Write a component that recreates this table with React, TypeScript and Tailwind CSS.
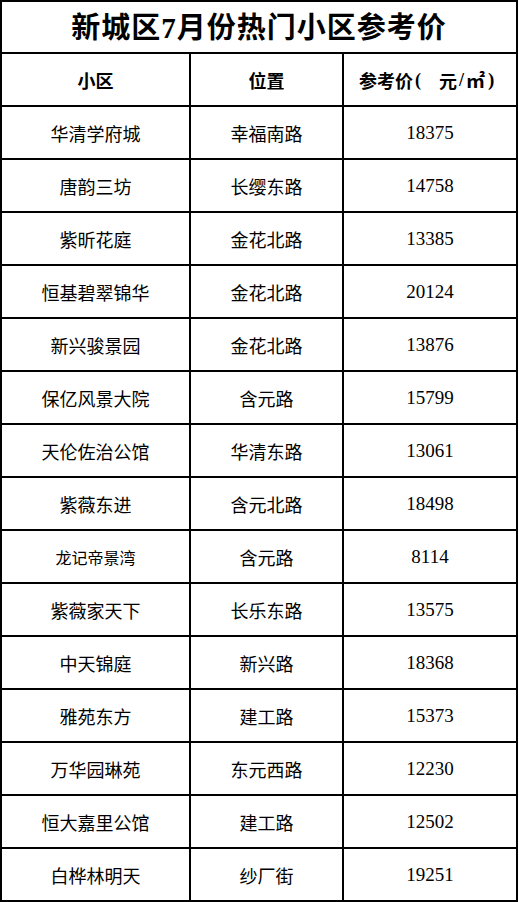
import React from "react";

const rows: [string, string, string][] = [
  ["华清学府城", "幸福南路", "18375"],
  ["唐韵三坊", "长缨东路", "14758"],
  ["紫昕花庭", "金花北路", "13385"],
  ["恒基碧翠锦华", "金花北路", "20124"],
  ["新兴骏景园", "金花北路", "13876"],
  ["保亿风景大院", "含元路", "15799"],
  ["天伦佐治公馆", "华清东路", "13061"],
  ["紫薇东进", "含元北路", "18498"],
  ["龙记帝景湾", "含元路", "8114"],
  ["紫薇家天下", "长乐东路", "13575"],
  ["中天锦庭", "新兴路", "18368"],
  ["雅苑东方", "建工路", "15373"],
  ["万华园琳苑", "东元西路", "12230"],
  ["恒大嘉里公馆", "建工路", "12502"],
  ["白桦林明天", "纱厂街", "19251"],
];

const cjk = "font-['Noto_Sans_CJK_SC',sans-serif]";
const latin = "font-['Liberation_Serif',serif]";

export default function App() {
  return (
    <div className="w-[519px] h-[902px] bg-white">
      <div className="w-[518px] border-l-2 border-t-2 border-black text-black">
        <div className="h-[52px] border-r-2 border-b-2 border-black flex items-center justify-center">
          <span className={`text-[29px] font-bold leading-none tracking-[1px] ${cjk}`}>
            新城区<span className={latin}>7</span>月份热门小区参考价
          </span>
        </div>
        <div className="flex h-[53px]">
          <div className={`w-[189px] border-r-2 border-b-2 border-black flex items-center justify-center text-[18px] font-bold leading-none ${cjk}`}>
            小区
          </div>
          <div className={`w-[153px] border-r-2 border-b-2 border-black flex items-center justify-center text-[18px] font-bold leading-none ${cjk}`}>
            位置
          </div>
          <div className="w-[174px] border-r-2 border-b-2 border-black flex items-center pl-[15px] text-[18px] font-bold leading-none whitespace-nowrap">
            <span className={cjk}>参考价</span>
            <span className={`${latin} ml-[2px] mr-[18px]`}>(</span>
            <span className={cjk}>元</span>
            <span className={`${latin} mx-[2px]`}>/</span>
            <span className={`${cjk} text-[19px]`}>㎡</span>
            <span className={`${latin} ml-[3px] text-[19px]`}>)</span>
          </div>
        </div>
        {rows.map(([name, loc, price]) => (
          <div key={name} className="flex h-[53px]">
            <div
              className={`w-[189px] border-r-2 border-b-2 border-black flex items-center justify-center leading-none ${cjk} ${
                name === "龙记帝景湾" ? "text-[16px]" : "text-[18px]"
              }`}
            >
              {name}
            </div>
            <div className={`w-[153px] border-r-2 border-b-2 border-black flex items-center justify-center text-[18px] leading-none ${cjk}`}>
              {loc}
            </div>
            <div className={`w-[174px] border-r-2 border-b-2 border-black flex items-center justify-center text-[19px] leading-none ${latin}`}>
              {price}
            </div>
          </div>
        ))}
      </div>
    </div>
  );
}
